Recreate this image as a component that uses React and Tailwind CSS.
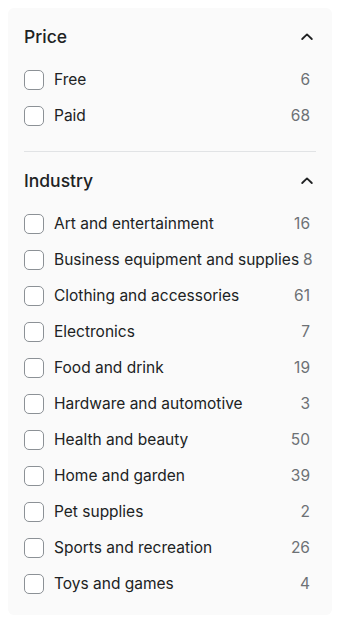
import React from 'react';

const price = [
  { label: 'Free', count: 6 },
  { label: 'Paid', count: 68 },
];

const industry = [
  { label: 'Art and entertainment', count: 16 },
  { label: 'Business equipment and supplies', count: 8 },
  { label: 'Clothing and accessories', count: 61 },
  { label: 'Electronics', count: 7 },
  { label: 'Food and drink', count: 19 },
  { label: 'Hardware and automotive', count: 3 },
  { label: 'Health and beauty', count: 50 },
  { label: 'Home and garden', count: 39 },
  { label: 'Pet supplies', count: 2 },
  { label: 'Sports and recreation', count: 26 },
  { label: 'Toys and games', count: 4 },
];

const Chevron = () => (
  <svg width="16" height="16" viewBox="0 0 20 20" className="mr-[1px]">
    <path d="M4 12.5 10 6.8l6 5.7" fill="none" stroke="#202223" strokeWidth="2.3" strokeLinecap="round" strokeLinejoin="round" />
  </svg>
);

const Row = ({ label, count }) => (
  <label className="flex items-center h-9 cursor-pointer">
    <span className="w-5 h-5 rounded-[5px] border border-[#8c9196] bg-white shrink-0" />
    <span className="ml-[10px] flex-1 text-[15.5px] text-[#202223] whitespace-nowrap">{label}</span>
    <span className="text-[15.5px] text-[#6d7175] pr-[6px] pl-1">{count}</span>
  </label>
);

const Section = ({ title, items }) => (
  <div>
    <div className="flex items-center justify-between h-6">
      <h2 className="text-[17.5px] font-medium text-[#202223]">{title}</h2>
      <Chevron />
    </div>
    <div className="mt-[13px]">
      {items.map(i => <Row key={i.label} {...i} />)}
    </div>
  </div>
);

export default function App() {
  return (
    <div className="min-h-screen bg-white pt-2 px-2" style={{ fontFamily: 'Inter, "Noto Sans", sans-serif' }}>
      <div className="w-[324px] bg-[#fafafa] rounded-md pt-[17px] pb-[13px] px-4">
        <Section title="Price" items={price} />
        <div className="h-px bg-[#e1e3e5] mt-[17px] mb-[17px]" />
        <Section title="Industry" items={industry} />
      </div>
    </div>
  );
}
